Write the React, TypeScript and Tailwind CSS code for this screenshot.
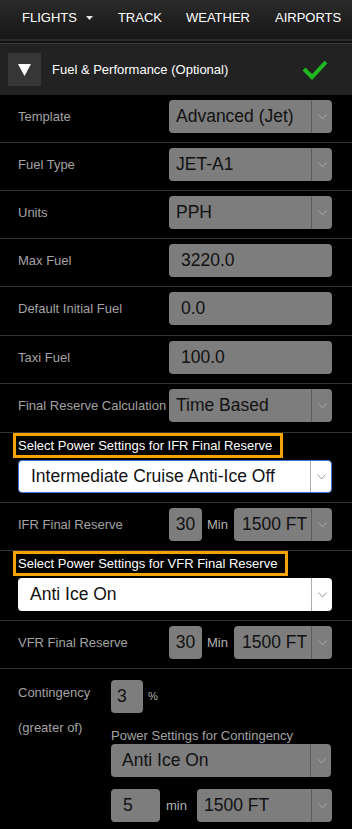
import type { ReactNode } from 'react'

function Chevron({ color = '#a9a9a9' }: { color?: string }) {
  return (
    <svg width="9" height="6" viewBox="0 0 9 6" fill="none">
      <polyline points="0.5,0.5 4.5,5 8.5,0.5" stroke={color} strokeWidth="1" />
    </svg>
  )
}

function Select({
  value,
  white = false,
  focused = false,
  pad = 'pl-[7px]',
  className = '',
}: {
  value: string
  white?: boolean
  focused?: boolean
  pad?: string
  className?: string
}) {
  return (
    <div
      className={`flex h-[33px] items-stretch rounded-[4px] ${
        white ? 'bg-white' : 'bg-[#7d7d7d]'
      } ${focused ? 'border border-[#3b76d6]' : ''} ${className}`}
    >
      <div className={`flex flex-1 items-center overflow-hidden whitespace-nowrap text-[17.5px] text-[#111] ${pad}`}>
        {value}
      </div>
      <div
        className={`flex w-[21px] items-center justify-center border-l ${
          white ? 'border-[#a9a9a9]' : 'border-[#5c5c5c]'
        }`}
      >
        <Chevron color={white ? '#9a9a9a' : '#a9a9a9'} />
      </div>
    </div>
  )
}

function Input({ value, className = '' }: { value: string; className?: string }) {
  return (
    <div
      className={`flex h-[33px] items-center rounded-[4px] bg-[#7d7d7d] text-[17.5px] text-[#111] ${className}`}
    >
      {value}
    </div>
  )
}

function Row({ label, h = 'h-[48px]', children }: { label: string; h?: string; children: ReactNode }) {
  return (
    <div className={`flex ${h} items-start border-b border-[#333] pl-[18px] pr-[20px] pt-[5px]`}>
      <div className="flex h-[33px] flex-1 items-center whitespace-nowrap text-[13px] text-[#a3a3a3]">{label}</div>
      <div className="w-[163px]">{children}</div>
    </div>
  )
}

function PowerSection({ label, value, focused }: { label: string; value: string; focused?: boolean }) {
  return (
    <div className="flex h-[70px] flex-col border-b border-[#333]">
      <div className="ml-[13px] flex h-[25px] items-center self-start border-[3px] border-[#f5a300] bg-black pl-[2px] pr-[8px] text-[13px] text-white">
        {label}
      </div>
      <Select value={value} white focused={focused} pad="pl-[12px]" className="ml-[18px] mr-[20px] mt-[2px]" />
    </div>
  )
}

function ReserveRow({ label }: { label: string }) {
  return (
    <Row label={label}>
      <div className="flex h-[33px] items-center">
        <Input value="30" className="h-[32px] w-[33px] justify-center" />
        <span className="ml-[5px] text-[13px] text-[#b3b3b3]">Min</span>
        <Select value="1500 FT" pad="pl-[8px]" className="ml-auto h-[32px] w-[98px]" />
      </div>
    </Row>
  )
}

export default function App() {
  return (
    <div className="min-h-screen w-[352px] bg-black font-['Liberation_Sans',Arial,sans-serif]">
      {/* Top nav */}
      <nav className="flex h-[39px] items-start bg-gradient-to-b from-[#2b2b2b] to-[#161616] pl-[22px] pt-[10px] text-[13px] leading-[15px] text-white">
        <span className="flex items-center">
          FLIGHTS
          <svg className="ml-[9px]" width="7" height="4" viewBox="0 0 7 4">
            <polygon points="0,0 7,0 3.5,4" fill="#e6e6e6" />
          </svg>
        </span>
        <span className="ml-[25px]">TRACK</span>
        <span className="ml-[24px]">WEATHER</span>
        <span className="ml-[25px] whitespace-nowrap">AIRPORTS</span>
      </nav>
      <div className="h-[2px] bg-[#2b2b2b]" />
      <div className="h-[2px] bg-[#121212]" />
      <div className="h-px bg-[#3a3a3a]" />

      {/* Section header */}
      <div className="flex h-[51px] items-center bg-[#222] pl-[8px]">
        <div className="flex h-[33px] w-[33px] items-center justify-center bg-[#363636]">
          <svg width="13" height="12" viewBox="0 0 13 12">
            <polygon points="0,0 13,0 6.5,12" fill="#fff" />
          </svg>
        </div>
        <span className="ml-[11px] text-[13px] text-white">Fuel &amp; Performance (Optional)</span>
        <svg className="ml-auto mr-[24px]" width="26" height="20" viewBox="0 0 26 20">
          <polyline points="2,9 10,17 24,2" fill="none" stroke="#1fb81f" strokeWidth="4" />
        </svg>
      </div>

      <Row label="Template">
        <Select value="Advanced (Jet)" />
      </Row>
      <Row label="Fuel Type">
        <Select value="JET-A1" />
      </Row>
      <Row label="Units">
        <Select value="PPH" />
      </Row>
      <Row label="Max Fuel">
        <Input value="3220.0" className="pl-[12px]" />
      </Row>
      <Row label="Default Initial Fuel" h="h-[49px]">
        <Input value="0.0" className="pl-[12px]" />
      </Row>
      <Row label="Taxi Fuel">
        <Input value="100.0" className="pl-[12px]" />
      </Row>
      <Row label="Final Reserve Calculation" h="h-[49px]">
        <Select value="Time Based" />
      </Row>

      <PowerSection label="Select Power Settings for IFR Final Reserve" value="Intermediate Cruise Anti-Ice Off" focused />
      <ReserveRow label="IFR Final Reserve" />
      <PowerSection label="Select Power Settings for VFR Final Reserve" value="Anti Ice On" />
      <ReserveRow label="VFR Final Reserve" />

      {/* Contingency */}
      <div className="flex pb-[8px] pl-[18px] pr-[20px]">
        <div className="w-[93px] pt-[16px] text-[13px] leading-[15px] text-[#a3a3a3]">
          <div>Contingency</div>
          <div className="mt-[20px]">(greater of)</div>
        </div>
        <div className="flex-1 pt-[11px]">
          <div className="flex items-end">
            <Input value="3" className="w-[32px] pl-[6px]" />
            <span className="mb-[9px] ml-[5px] text-[11px] text-[#b3b3b3]">%</span>
          </div>
          <div className="mt-[15px] text-[13px] leading-[15px] text-[#a3a3a3]">Power Settings for Contingency</div>
          <Select value="Anti Ice On" pad="pl-[11px]" className="mt-px w-[220px]" />
          <div className="mt-[12px] flex items-center">
            <Input value="5" className="w-[49px] pl-[12px]" />
            <span className="ml-[6px] text-[13px] text-[#b3b3b3]">min</span>
            <Select value="1500 FT" pad="pl-[7px]" className="ml-auto w-[135px]" />
          </div>
        </div>
      </div>
    </div>
  )
}
